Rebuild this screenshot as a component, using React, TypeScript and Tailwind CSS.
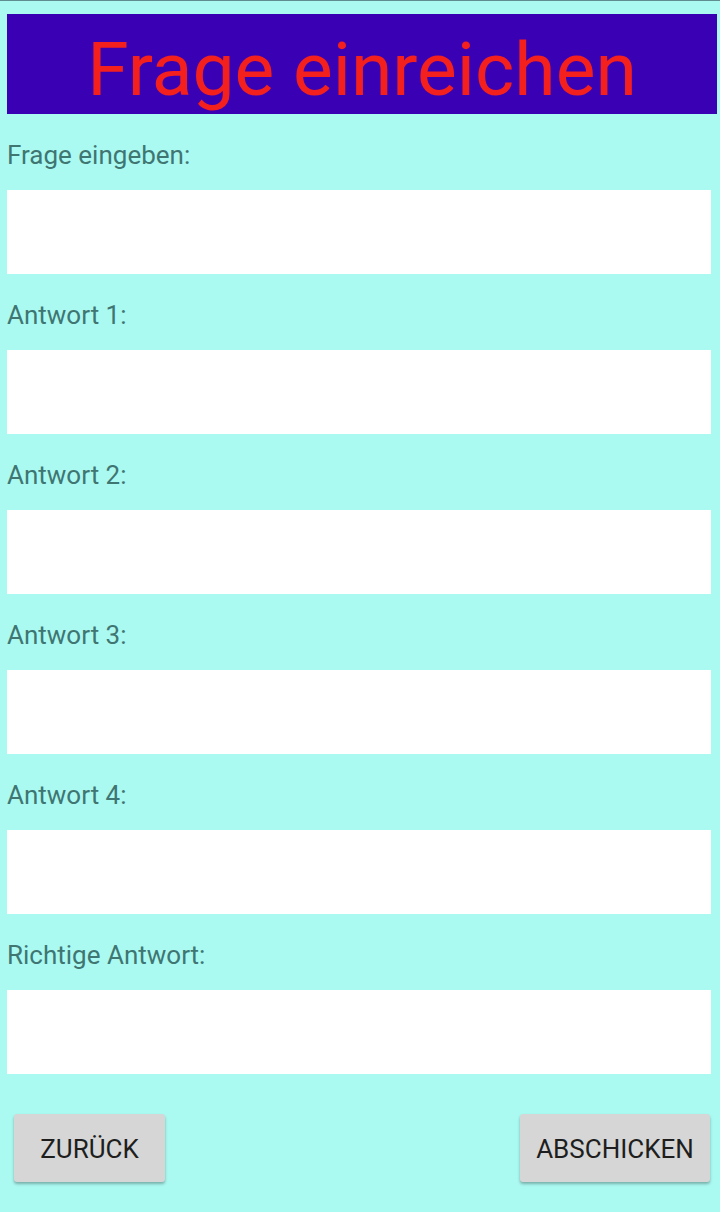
import React from "react";

const fields = [
  "Frage eingeben:",
  "Antwort 1:",
  "Antwort 2:",
  "Antwort 3:",
  "Antwort 4:",
  "Richtige Antwort:",
];

export default function App() {
  return (
    <div
      className="w-[720px] h-[1212px] bg-[#abfaf2] border-t border-[#5f8d92] flex flex-col"
      style={{ fontFamily: "Roboto, 'Noto Sans', sans-serif" }}
    >
      <div className="mt-[13px] ml-[7px] mr-[3px] h-[100px] pt-[10px] bg-[#3900b4] flex items-center justify-center">
        <span className="text-[#f3201d] text-[75px] leading-none">Frage einreichen</span>
      </div>
      {fields.map((f) => (
        <div key={f} className="flex flex-col">
          <div className="pt-[27px] pb-[21px] pl-[7px] h-[76px] text-[26px] leading-[28px] text-[#3f7672]">
            {f}
          </div>
          <div className="ml-[7px] mr-[9px] h-[84px] bg-white" />
        </div>
      ))}
      <div className="mt-[40px] flex justify-between pl-[14px] pr-[10px]">
        <button className="w-[151px] h-[68px] pt-[3px] bg-[#d6d6d6] rounded-[3px] shadow-[0_2px_3px_rgba(0,0,0,0.3)] text-[26px] text-[#1e1e1e] uppercase">
          Zurück
        </button>
        <button className="w-[190px] h-[68px] pt-[3px] bg-[#d6d6d6] rounded-[3px] shadow-[0_2px_3px_rgba(0,0,0,0.3)] text-[26px] text-[#1e1e1e] uppercase">
          Abschicken
        </button>
      </div>
    </div>
  );
}
